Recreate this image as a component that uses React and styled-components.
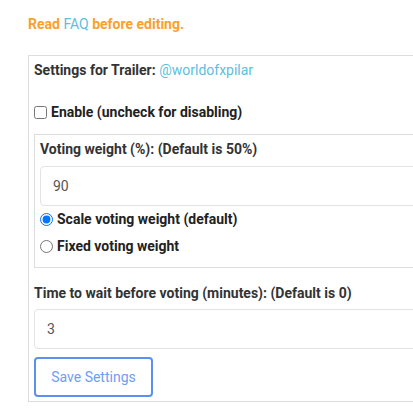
import styled, { createGlobalStyle } from "styled-components";

const Global = createGlobalStyle`
  body {
    margin: 0;
    overflow: hidden;
    background: #fff;
    font-family: Roboto, "Liberation Sans", sans-serif;
    font-size: 14px;
    line-height: 20px;
    color: #333;
  }
`;

const Page = styled.div`
    padding: 14px 0 0 28px;
    width: 640px;
`;

const Notice = styled.div`
    font-weight: bold;
    color: #f9a12e;
    margin-bottom: 21px;
`;

const Link = styled.span`
    color: #5bc0de;
    font-weight: normal;
`;

const Panel = styled.div`
    border: 1px solid #ddd;
    padding: 4px 5px 4px 5px;
`;

const Title = styled.div`
    font-weight: bold;
    margin-bottom: 22px;
`;

const CheckRow = styled.label`
    display: flex;
    align-items: center;
    gap: 4px;
    font-weight: bold;
    color: #222;
    margin-top: ${p => p.top || 0}px;

    input {
        margin: 0;
        width: 13px;
        height: 13px;
    }
`;

const Group = styled.div`
    border: 1px solid #ddd;
    padding: 4px 5px 11px 5px;
    margin-top: 12px;
`;

const Label = styled.div`
    font-weight: bold;
`;

const Field = styled.input`
    display: block;
    box-sizing: border-box;
    width: 100%;
    height: 40px;
    margin: ${p => p.gap}px 0 3px 0;
    padding: 0 12px;
    border: 1px solid #e3e3e3;
    border-radius: 4px;
    font-family: Roboto, "Liberation Sans", sans-serif;
    font-size: 14px;
    color: #555;
    outline: none;
`;

const Section = styled.div`
    margin-top: 15px;
`;

const SaveButton = styled.button`
    display: block;
    margin-top: 8px;
    width: 119px;
    height: 40px;
    border: 2px solid #5d8ff0;
    border-radius: 4px;
    background: #fff;
    color: #6f9df5;
    font-family: Roboto, "Liberation Sans", sans-serif;
    font-size: 14px;
    cursor: pointer;
`;

export default function App() {
    return (
        <Page>
            <Global />
            <Notice>Read <Link>FAQ</Link> before editing.</Notice>
            <Panel>
                <Title>Settings for Trailer: <Link>@worldofxpilar</Link></Title>
                <CheckRow>
                    <input type="checkbox" />
                    Enable (uncheck for disabling)
                </CheckRow>
                <Group>
                    <Label>Voting weight (%): (Default is 50%)</Label>
                    <Field gap={7} defaultValue="90" />
                    <CheckRow>
                        <input type="radio" name="mode" defaultChecked />
                        Scale voting weight (default)
                    </CheckRow>
                    <CheckRow top={7}>
                        <input type="radio" name="mode" />
                        Fixed voting weight
                    </CheckRow>
                </Group>
                <Section>
                    <Label>Time to wait before voting (minutes): (Default is 0)</Label>
                    <Field gap={6} defaultValue="3" />
                    <SaveButton>Save Settings</SaveButton>
                </Section>
            </Panel>
        </Page>
    );
}
